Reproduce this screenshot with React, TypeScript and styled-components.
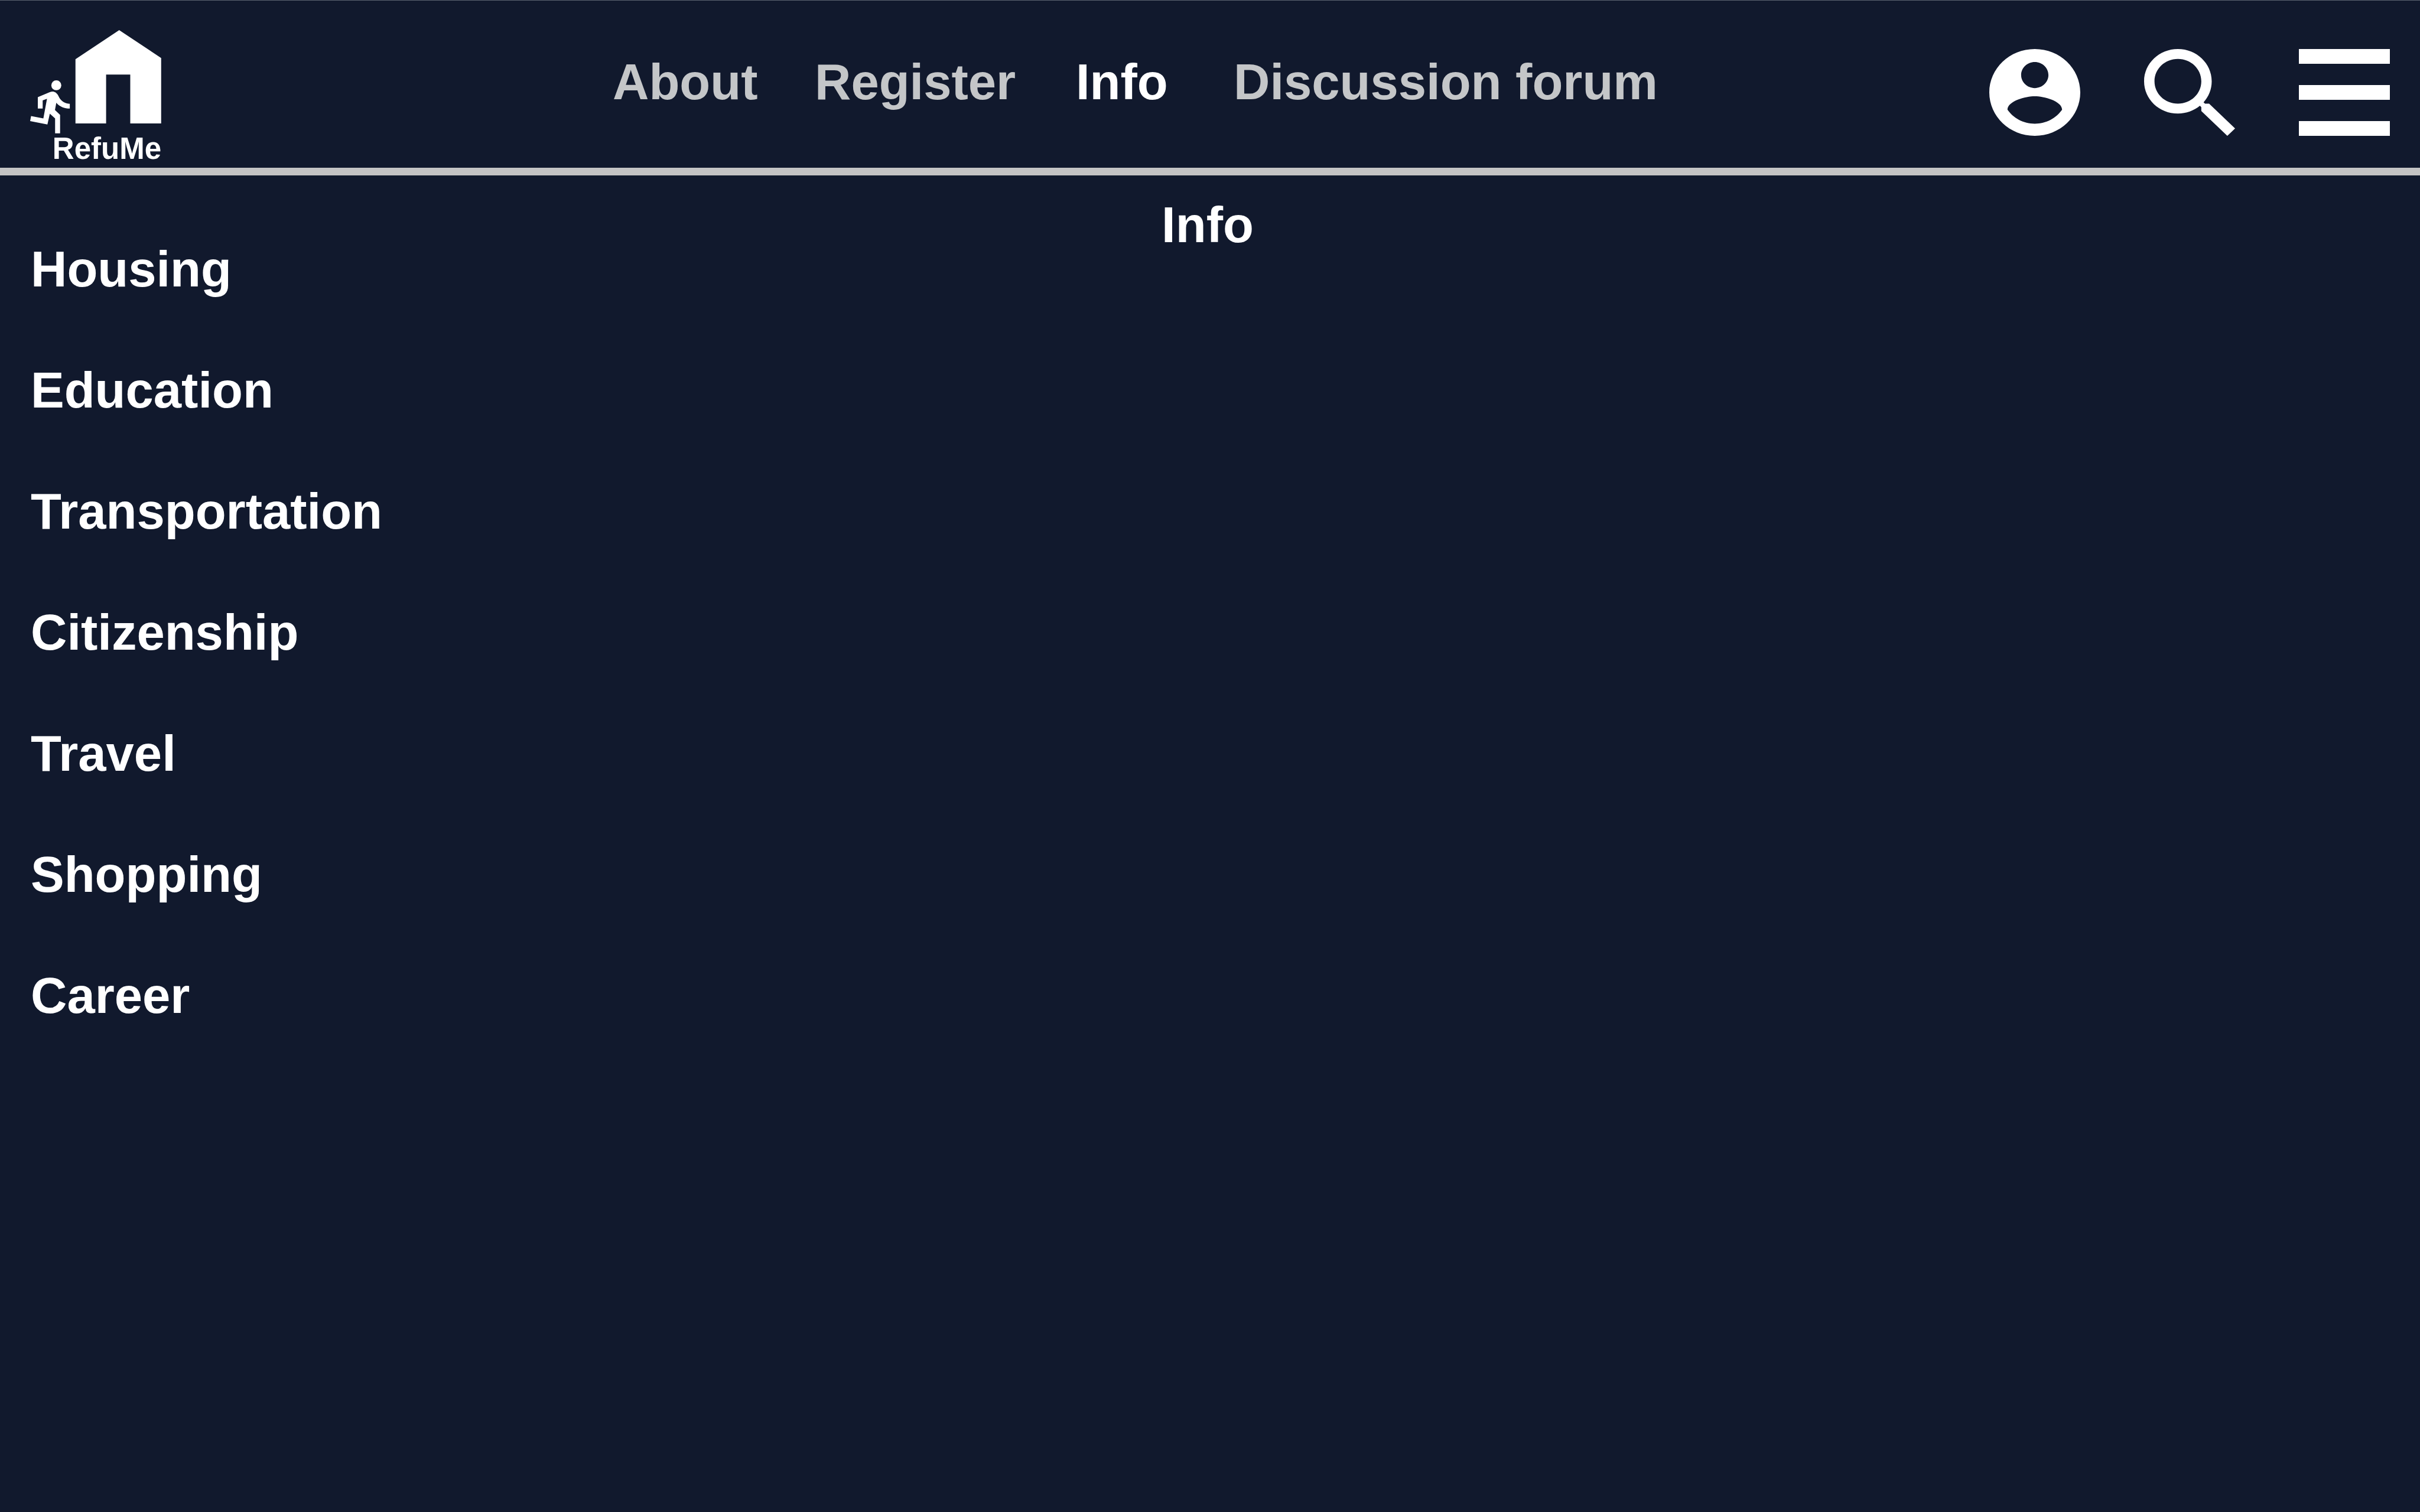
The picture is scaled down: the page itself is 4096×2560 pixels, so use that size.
import React from "react";
import styled, { createGlobalStyle } from "styled-components";

const navy = "#11192d";
const white = "#ffffff";
const silver = "#c4c4c4";
const muted = "#c4c6c8";

const GlobalStyle = createGlobalStyle`
  *, *::before, *::after {
    box-sizing: border-box;
  }
  body {
    margin: 0;
    background: ${navy};
    color: ${white};
    font-family: "Liberation Sans", Arial, Helvetica, sans-serif;
    font-size: 85px;
    font-weight: 700;
    line-height: 96px;
  }
`;

const Page = styled.div`
  min-height: 100vh;
  background: ${navy};
`;

const Header = styled.header`
  display: grid;
  grid-template-columns: 986fr 2330fr auto;
  align-items: start;
  padding: 50px 51px 6px;
  border-top: 1px solid #5b6270;
  border-bottom: 13px solid ${silver};
`;

const Logo = styled.a`
  display: flex;
  flex-direction: column;
  align-items: flex-end;
  justify-self: start;
  color: ${white};
  text-decoration: none;
`;

const LogoMark = styled.svg`
  display: block;
  width: 222px;
  height: 175px;
  fill: currentColor;
`;

const LogoName = styled.span`
  font-size: 51px;
  line-height: 52px;
`;

const Nav = styled.nav`
  display: grid;
  grid-template-columns: 342px 442px 267px auto;
  justify-content: start;
  padding-top: 40px;
`;

const NavLink = styled.a<{ $active?: boolean }>`
  color: ${({ $active }) => ($active ? white : muted)};
  text-decoration: none;
  white-space: nowrap;
`;

const Actions = styled.div`
  display: flex;
  gap: 108px;
  padding-top: 32px;
`;

const IconButton = styled.button`
  display: block;
  padding: 0;
  border: 0;
  background: none;
  color: ${white};
  cursor: pointer;
`;

const Icon = styled.svg`
  display: block;
  width: 154px;
  height: 147px;
  fill: currentColor;
`;

const Main = styled.main`
  display: grid;
  grid-template-columns: 1fr auto 1fr;
  align-items: start;
  padding: 36px 60px 0 52px;
`;

const Topics = styled.ul`
  display: flex;
  flex-direction: column;
  align-items: flex-start;
  gap: 109px;
  margin: 0;
  padding: 75px 0 0;
  list-style: none;
`;

const TopicLink = styled.a`
  display: block;
  color: ${white};
  text-decoration: none;
`;

const Title = styled.h1`
  margin: 0;
  font-size: 85px;
  line-height: 96px;
`;

const sections = ["About", "Register", "Info", "Discussion forum"];

const topics = [
  "Housing",
  "Education",
  "Transportation",
  "Citizenship",
  "Travel",
  "Shopping",
  "Career",
];

export default function App() {
  const current = "Info";

  return (
    <Page>
      <GlobalStyle />
      <Header>
        <Logo href="#home">
          <LogoMark viewBox="225 225 972 768" preserveAspectRatio="none" aria-hidden="true">
            <path d="M561 441 885 225 1196 432V918H967V555H788V918H561Z" />
            <circle cx="419" cy="635" r="37" />
            <path d="M282 723 368 687Q384 681 400 682Q414 684 426 700C434 711 437 720 445 733C463 758 487 772 519 772V808C478 808 445 795 419 765L409 819 447 855V992H410V881L371 846 353 926 225 901 232 864 323 881 350 735 318 747V808H282Z" />
          </LogoMark>
          <LogoName>RefuMe</LogoName>
        </Logo>

        <Nav aria-label="Main">
          {sections.map((name) => (
            <NavLink
              key={name}
              href={`#${name.toLowerCase().replace(" ", "-")}`}
              $active={name === current}
              aria-current={name === current ? "page" : undefined}
            >
              {name}
            </NavLink>
          ))}
        </Nav>

        <Actions>
          <IconButton type="button" aria-label="Account">
            <Icon viewBox="2 2 20 20" preserveAspectRatio="none" aria-hidden="true">
              <path d="M12 2C6.48 2 2 6.48 2 12s4.48 10 10 10 10-4.48 10-10S17.52 2 12 2zm0 3c1.66 0 3 1.34 3 3s-1.34 3-3 3-3-1.34-3-3 1.34-3 3-3zm0 14.2c-2.5 0-4.71-1.28-6-3.22.03-1.99 4-3.08 6-3.08 1.99 0 5.97 1.09 6 3.08-1.29 1.94-3.5 3.22-6 3.22z" />
            </Icon>
          </IconButton>
          <IconButton type="button" aria-label="Search">
            <Icon viewBox="3 3 17.49 17.49" preserveAspectRatio="none" aria-hidden="true">
              <path d="M15.5 14h-.79l-.28-.27C15.41 12.59 16 11.11 16 9.5 16 5.91 13.09 3 9.5 3S3 5.91 3 9.5 5.91 16 9.5 16c1.61 0 3.09-.59 4.23-1.57l.27.28v.79l5 4.99L20.49 19l-4.99-5zm-6 0C7.01 14 5 11.99 5 9.5S7.01 5 9.5 5 14 7.01 14 9.5 11.99 14 9.5 14z" />
            </Icon>
          </IconButton>
          <IconButton type="button" aria-label="Menu">
            <Icon viewBox="0 0 154 147" preserveAspectRatio="none" aria-hidden="true">
              <path d="M0 0H154V25H0ZM0 61H154V86H0ZM0 122H154V147H0Z" />
            </Icon>
          </IconButton>
        </Actions>
      </Header>

      <Main>
        <Topics>
          {topics.map((topic) => (
            <li key={topic}>
              <TopicLink href={`#${topic.toLowerCase()}`}>{topic}</TopicLink>
            </li>
          ))}
        </Topics>
        <Title>Info</Title>
      </Main>
    </Page>
  );
}
